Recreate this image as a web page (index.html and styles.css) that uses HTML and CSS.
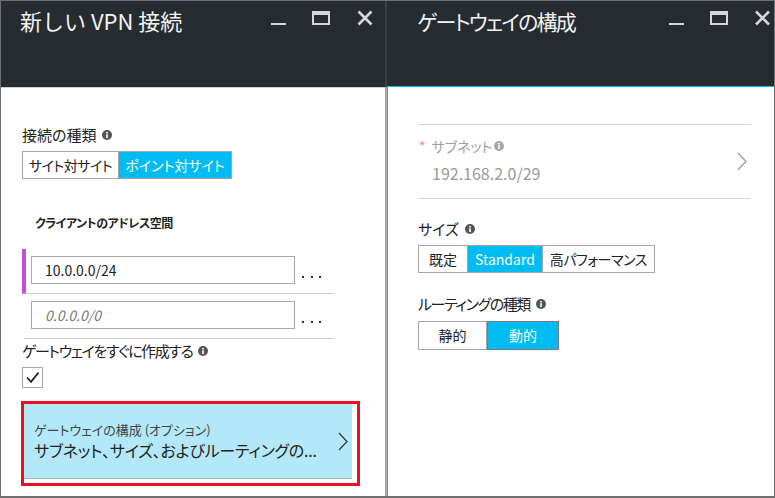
FILE: index.html
```html
<!DOCTYPE html>
<html lang="ja">
<head>
<meta charset="utf-8">
<title>VPN</title>
<link rel="stylesheet" href="styles.css">
</head>
<body>
<div class="frame">
  <section class="blade blade-left">
    <header class="blade-head head-left">
      <h1 class="blade-title title-left">新しい VPN 接続</h1>
      <div class="win-ctrls">
        <svg class="ctl ctl-min" width="15" height="16" viewBox="0 0 15 16"><rect x="0" y="13" width="15" height="2" fill="#d6d6d6"/></svg>
        <svg class="ctl ctl-max" width="18" height="16" viewBox="0 0 18 16"><rect x="1" y="2" width="16" height="12" fill="none" stroke="#d6d6d6" stroke-width="2"/><rect x="0" y="1" width="18" height="4" fill="#d6d6d6"/></svg>
        <svg class="ctl ctl-close" width="16" height="16" viewBox="0 0 16 16"><path d="M1.5 1.5 L14.5 14.5 M14.5 1.5 L1.5 14.5" stroke="#d6d6d6" stroke-width="2.6"/></svg>
      </div>
    </header>
    <div class="blade-body body-left">
      <div class="field-label">接続の種類<svg class="info" width="10" height="10" viewBox="0 0 10 10"><circle cx="5" cy="5" r="5" fill="#555"/><rect x="4.2" y="4.2" width="1.6" height="3.8" fill="#fff"/><rect x="4.2" y="2" width="1.6" height="1.5" fill="#fff"/></svg></div>
      <div class="seg seg-conn">
        <span class="seg-btn tight">サイト対サイト</span>
        <span class="seg-btn is-on">ポイント対サイト</span>
      </div>
      <div class="sub-heading">クライアントのアドレス空間</div>
      <div class="addr-row is-active">
        <div class="addr-input">10.0.0.0/24</div>
        <span class="dots"><i></i><i></i><i></i></span>
      </div>
      <div class="addr-row">
        <div class="addr-input is-placeholder">0.0.0.0/0</div>
        <span class="dots"><i></i><i></i><i></i></span>
      </div>
      <div class="field-label label-create"><span class="kana-tight">ゲートウェイをすぐに作成する</span><svg class="info" width="10" height="10" viewBox="0 0 10 10"><circle cx="5" cy="5" r="5" fill="#555"/><rect x="4.2" y="4.2" width="1.6" height="3.8" fill="#fff"/><rect x="4.2" y="2" width="1.6" height="1.5" fill="#fff"/></svg></div>
      <div class="checkbox"><svg width="19" height="19" viewBox="0 0 19 19"><path d="M4 9.5 L8 13.8 L15.5 4.5" fill="none" stroke="#222" stroke-width="1.8"/></svg></div>
      <div class="nav-item-wrap">
        <div class="nav-item">
          <div class="nav-text">
            <div class="nav-title">ゲートウェイの構成 (オプション)</div>
            <div class="nav-value">サブネット、サイズ、およびルーティングの...</div>
          </div>
          <svg class="chev" width="10" height="19" viewBox="0 0 10 19"><path d="M1 1 L9 9.5 L1 18" fill="none" stroke="#333" stroke-width="1.2"/></svg>
        </div>
        <div class="highlight"></div>
      </div>
    </div>
  </section>
  <div class="split"></div>
  <section class="blade blade-right">
    <header class="blade-head head-right">
      <h1 class="blade-title title-right">ゲートウェイの構成</h1>
      <div class="win-ctrls">
        <svg class="ctl ctl-min" width="15" height="16" viewBox="0 0 15 16"><rect x="0" y="13" width="15" height="2" fill="#d6d6d6"/></svg>
        <svg class="ctl ctl-max" width="18" height="16" viewBox="0 0 18 16"><rect x="1" y="2" width="16" height="12" fill="none" stroke="#d6d6d6" stroke-width="2"/><rect x="0" y="1" width="18" height="4" fill="#d6d6d6"/></svg>
        <svg class="ctl ctl-close" width="17" height="16" viewBox="0 0 17 16"><path d="M2 1.5 L15 14.5 M15 1.5 L2 14.5" stroke="#d6d6d6" stroke-width="2.6"/></svg>
      </div>
    </header>
    <div class="blade-body body-right">
      <div class="subnet-row">
        <div class="subnet-text">
          <div class="subnet-label"><span class="req">*</span>サブネット<svg class="info" width="10" height="10" viewBox="0 0 10 10"><circle cx="5" cy="5" r="5" fill="#a8a8a8"/><rect x="4.2" y="4.2" width="1.6" height="3.8" fill="#fff"/><rect x="4.2" y="2" width="1.6" height="1.5" fill="#fff"/></svg></div>
          <div class="subnet-value">192.168.2.0/29</div>
        </div>
        <svg class="chev chev-gray" width="10" height="19" viewBox="0 0 10 19"><path d="M1 1 L9 9.5 L1 18" fill="none" stroke="#9a9a9a" stroke-width="1.2"/></svg>
      </div>
      <div class="field-label label-size">サイズ<svg class="info" width="10" height="10" viewBox="0 0 10 10"><circle cx="5" cy="5" r="5" fill="#555"/><rect x="4.2" y="4.2" width="1.6" height="3.8" fill="#fff"/><rect x="4.2" y="2" width="1.6" height="1.5" fill="#fff"/></svg></div>
      <div class="seg seg-size">
        <span class="seg-btn btn-default">既定</span>
        <span class="seg-btn is-on">Standard</span>
        <span class="seg-btn tight">高パフォーマンス</span>
      </div>
      <div class="field-label label-route"><span class="kana-tight">ルーティングの種類</span><svg class="info" width="10" height="10" viewBox="0 0 10 10"><circle cx="5" cy="5" r="5" fill="#555"/><rect x="4.2" y="4.2" width="1.6" height="3.8" fill="#fff"/><rect x="4.2" y="2" width="1.6" height="1.5" fill="#fff"/></svg></div>
      <div class="seg seg-route">
        <span class="seg-btn btn-static">静的</span>
        <span class="seg-btn btn-dynamic is-on is-focus">動的</span>
      </div>
    </div>
  </section>
</div>
</body>
</html>
```

FILE: styles.css
```css
* { box-sizing: border-box; margin: 0; padding: 0; }
html, body { width: 775px; height: 498px; overflow: hidden; background: #fff; }
body {
  font-family: "Noto Sans CJK JP", "Noto Sans", sans-serif;
  font-feature-settings: "palt";
  color: #222;
}
.frame {
  width: 775px;
  height: 498px;
  border: 1px solid #707070;
  border-bottom-width: 2px;
  display: flex;
}
.blade { display: flex; flex-direction: column; }
.blade-left { width: 384px; }
.blade-right { flex: 1; }
.split {
  width: 2px;
  background: linear-gradient(#3a3f44 0, #3a3f44 86px, #a8a8a8 86px);
}
.blade-head {
  background: #272c31;
  display: flex;
  align-items: flex-start;
  color: #fff;
}
.head-left { height: 86px; padding-left: 19px; padding-right: 12px; }
.head-right { height: 85px; padding-left: 30px; padding-right: 3px; }
.blade-title {
  font-weight: 400;
  font-size: 22px;
  line-height: 28px;
  margin-top: 5px;
  color: #f2f2f2;
  white-space: nowrap;
}
.title-left { font-feature-settings: normal; }
.title-right { font-size: 21px; letter-spacing: -1.8px; margin-top: 6px; }
.win-ctrls {
  margin-left: auto;
  display: flex;
  align-items: flex-start;
  margin-top: 9px;
}
.ctl { display: block; }
.ctl-min { margin-right: 26px; }
.ctl-max { margin-right: 27px; }
.head-right .ctl-max { margin-right: 26px; }

.blade-body { flex: 1; }
.body-left {
  border-top: 1px solid #cfcfcf;
  padding: 37px 0 0 21px;
}
.field-label {
  font-size: 15px;
  line-height: 20px;
  display: flex;
  align-items: center;
  color: #222;
  white-space: nowrap;
}
.kana-tight { letter-spacing: -1.4px; }
.info { margin-left: 6px; display: block; flex: none; }
.seg { display: flex; margin-top: 6px; }
.seg-btn {
  height: 28px;
  border: 1px solid #a6a6a6;
  font-size: 14px;
  line-height: 26px;
  padding: 0 7px;
  color: #222;
  background: #fff;
  white-space: nowrap;
  text-align: center;
}
.seg-btn.tight { letter-spacing: -0.5px; }
.seg-btn + .seg-btn { border-left: none; }
.seg-btn.is-on { background: #00bcf2; color: #fff; }
.seg-conn .seg-btn:first-child { width: 97px; padding: 0; }
.seg-conn .seg-btn:last-child { width: 113px; padding: 0; }

.sub-heading {
  font-size: 12px;
  font-weight: 700;
  letter-spacing: -0.5px;
  line-height: 18px;
  margin: 35px 0 0 13px;
  color: #222;
}
.addr-row {
  width: 312px;
  display: flex;
  align-items: flex-end;
  border-left: 4px solid transparent;
  border-bottom: 1px solid #cccccc;
  padding: 7px 0 9px 5px;
}
.addr-row.is-active { border-left-color: #c64fd8; margin-top: 17px; }
.addr-input {
  width: 264px;
  height: 28px;
  border: 1px solid #a6a6a6;
  padding-left: 13px;
  font-size: 14px;
  line-height: 26px;
  color: #222;
}
.addr-input.is-placeholder { font-style: italic; color: #7a7a7a; }
.dots {
  display: flex;
  gap: 6.5px;
  margin-left: 7px;
  margin-bottom: 6px;
}
.dots i { display: block; width: 2px; height: 2px; background: #333; }
.label-create { margin-top: 2px; }
.label-create .info { margin-left: 5px; }
.checkbox {
  width: 21px;
  height: 21px;
  border: 1px solid #a6a6a6;
  margin-top: 6px;
  display: flex;
  align-items: center;
  justify-content: center;
}
.checkbox svg { display: block; }
.nav-item-wrap {
  position: relative;
  margin-top: 13px;
  margin-left: -1px;
  width: 339px;
  padding-top: 3px;
}
.nav-item {
  width: 331px;
  height: 75px;
  background: #b2e8f7;
  border-bottom: 1px solid #a9b8bf;
  display: flex;
  align-items: center;
  padding: 0 4px 0 13px;
}
.nav-text { flex: 1; }
.nav-title { font-size: 13px; line-height: 18px; color: #444; margin-top: -1px; }
.nav-value { font-size: 16px; line-height: 22px; color: #222; letter-spacing: -0.2px; }
.chev { display: block; }
.highlight {
  position: absolute;
  left: 0;
  top: 0;
  width: 339px;
  height: 85px;
  border: 3px solid #e81123;
}

.body-right {
  border-left: 1px solid #00bcf2;
  border-top: 1px solid #00bcf2;
  padding: 37px 23px 0 30px;
}
.subnet-row {
  border-top: 1px solid #d6d6d6;
  border-bottom: 1px solid #d6d6d6;
  height: 75px;
  display: flex;
  align-items: center;
  padding: 0 4px 0 1px;
}
.subnet-text { flex: 1; margin-top: -4px; }
.subnet-label {
  display: flex;
  align-items: center;
  font-size: 14px;
  line-height: 20px;
  color: #a0a0a0;
}
.req { color: #f08b8b; margin-right: 6px; font-size: 14px; }
.subnet-label .info { margin-left: 2px; }
.subnet-value {
  font-size: 16px;
  line-height: 22px;
  color: #9a9a9a;
  margin: 6px 0 0 13px;
}
.label-size { margin-top: 20px; }
.seg-size .seg-btn { padding: 0 7px; }
.seg-size .btn-default { width: 50px; padding: 0; }
.label-route { margin-top: 21px; }
.seg-route { margin-top: 7px; }
.seg-route .seg-btn { height: 29px; line-height: 27px; }
.btn-static { width: 69px; }
.btn-dynamic { width: 72px; }
.seg-btn.is-focus { border: 1px solid #7c7c7c; }
```
